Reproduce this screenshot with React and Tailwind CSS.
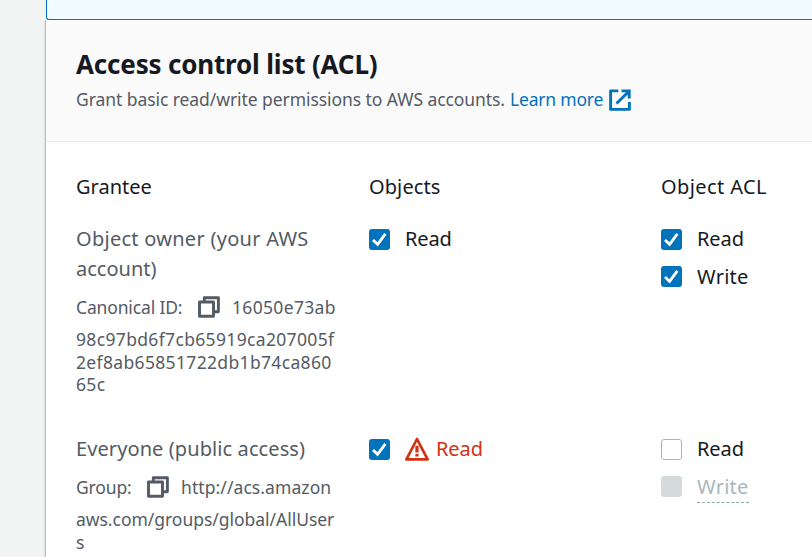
import React from "react";

function Checkbox({ state = "checked" }) {
  if (state === "empty")
    return <span className="block h-[21px] w-[21px] shrink-0 rounded-[3px] border border-[#aab7b8] bg-white" />;
  if (state === "disabled")
    return <span className="block h-[21px] w-[21px] shrink-0 rounded-[3px] bg-[#d5dbdb]" />;
  return (
    <span className="block h-[21px] w-[21px] shrink-0 rounded-[3px] bg-[#0073bb]">
      <svg viewBox="0 0 21 21" className="block h-full w-full" fill="none" stroke="#fff" strokeWidth="2.8">
        <path d="M4 11 8.6 15.3 16.4 4.9" />
      </svg>
    </span>
  );
}

function ExternalIcon() {
  return (
    <svg viewBox="0 0 22 22" className="mt-[2px] ml-[6px] h-[22px] w-[22px] shrink-0" fill="none" stroke="#0073bb" strokeWidth="2.9">
      <path d="M9.3 1.9H1.6V20.4H20.4V13" strokeLinejoin="round" />
      <path d="M12.5 1.9H20.2V9.5M20 2.3 7.5 14.5" />
    </svg>
  );
}

function CopyIcon() {
  return (
    <svg viewBox="0 0 22 22" className="h-[22px] w-[22px] shrink-0" fill="none" stroke="#545b64" strokeWidth="2.9" strokeLinejoin="round">
      <path d="M1.5 6H15.5V20.2H1.5Z" />
      <path d="M6.3 6V1.7H20.4V15.7H15.5" />
    </svg>
  );
}

function WarningIcon() {
  return (
    <svg viewBox="0 0 24 24" className="h-6 w-6 shrink-0" fill="none" stroke="#d13212" strokeWidth="2.7" strokeLinejoin="round">
      <path d="M12 2 22.6 22.4H1.4Z" />
      <path d="M12 8.8V15.5M12 17V19.4" strokeWidth="3.2" />
    </svg>
  );
}

export default function App() {
  return (
    <div className="flex h-[557px] w-[812px] overflow-hidden bg-[#f2f3f3] font-['Noto_Sans',sans-serif] text-[20px] leading-[30px] whitespace-nowrap text-[#16191f]">
      <div className="w-[45px] shrink-0" />
      <main className="flex w-[767px] shrink-0 flex-col">
        <div className="ml-px h-5 shrink-0 rounded-bl-[3px] border-b border-l border-[#0073bb] bg-[#f1faff]" />
        <section className="min-h-0 flex-1 border-l border-[#b9c3c2] bg-white shadow-[-1px_1px_1px_0_rgba(0,28,36,0.08)]">
          <header className="h-[122px] border-b border-[#eaeded] bg-[#fafafa] pt-[26px] pl-[30px]">
            <h2 className="h-9 text-[26px] leading-[36px] font-bold tracking-[-0.18px]">Access control list (ACL)</h2>
            <p className="flex h-[34px] items-center text-[17.5px] text-[#545b64]">
              <span className="tracking-[-0.07px]">Grant basic read/write permissions to AWS accounts.</span>
              <a className="ml-[5px] flex items-center text-[#0073bb]"><span className="tracking-[-0.2px]">Learn more</span><ExternalIcon /></a>
            </p>
          </header>
          <div className="grid grid-cols-[293px_292px_150px] pt-[30px] pl-[30px]">
            <h3 className="h-[52px]">Grantee</h3>
            <h3 className="tracking-[0.1px]">Objects</h3>
            <h3 className="tracking-[0.4px]">Object ACL</h3>

            <div className="h-[210px] text-[#545b64]">
              <div><span className="tracking-[0.27px]">Object owner (your AWS</span><br /><span>account)</span></div>
              <div className="mt-[7px] flex h-8 items-center text-[17.5px]">
                <span className="w-[122px] tracking-[-0.15px]">Canonical ID:</span><CopyIcon /><span className="ml-3 tracking-[0.33px]">16050e73ab</span>
              </div>
              <div className="mt-[5px] text-[17.5px] leading-[22.5px] tracking-[0.34px]">
                <span>98c97bd6f7cb65919ca207005f</span><br /><span>2ef8ab65851722db1b74ca860</span><br /><span>65c</span>
              </div>
            </div>
            <div className="flex h-[30px] items-center gap-[15px]"><Checkbox /><span className="tracking-[-0.15px]">Read</span></div>
            <div className="flex flex-col gap-[7px]">
              <div className="flex h-[30px] items-center gap-[15px]"><Checkbox /><span className="tracking-[-0.1px]">Read</span></div>
              <div className="flex h-[30px] items-center gap-[15px]"><Checkbox /><span className="pt-[2px] tracking-[0.25px]">Write</span></div>
            </div>

            <div className="text-[#545b64]">
              <div className="tracking-[0.09px]">Everyone (public access)</div>
              <div className="mt-[7px] flex h-8 items-center text-[17.5px]">
                <span className="w-[71px] tracking-[-0.15px]">Group:</span><CopyIcon /><span className="ml-3 tracking-[0.08px]">http://acs.amazon</span>
              </div>
              <div className="mt-[5px] text-[17.5px] leading-[22.5px]"><span className="tracking-[-0.03px]">aws.com/groups/global/AllUser</span><br />s</div>
            </div>
            <div className="flex h-[30px] items-center gap-[15px]"><Checkbox /><div className="flex items-center gap-[7px] text-[#d13212]"><WarningIcon /><span className="tracking-[-0.1px]">Read</span></div></div>
            <div className="flex flex-col gap-[7px]">
              <div className="flex h-[30px] items-center gap-[15px]"><Checkbox state="empty" /><span className="tracking-[-0.1px]">Read</span></div>
              <div className="flex h-[30px] items-center gap-[15px]"><Checkbox state="disabled" /><span className="mt-[2px] h-[31px] border-b border-dashed border-[#95a5a6] tracking-[0.25px] text-[#aab7b8]">Write</span></div>
            </div>
          </div>
        </section>
      </main>
    </div>
  );
}
